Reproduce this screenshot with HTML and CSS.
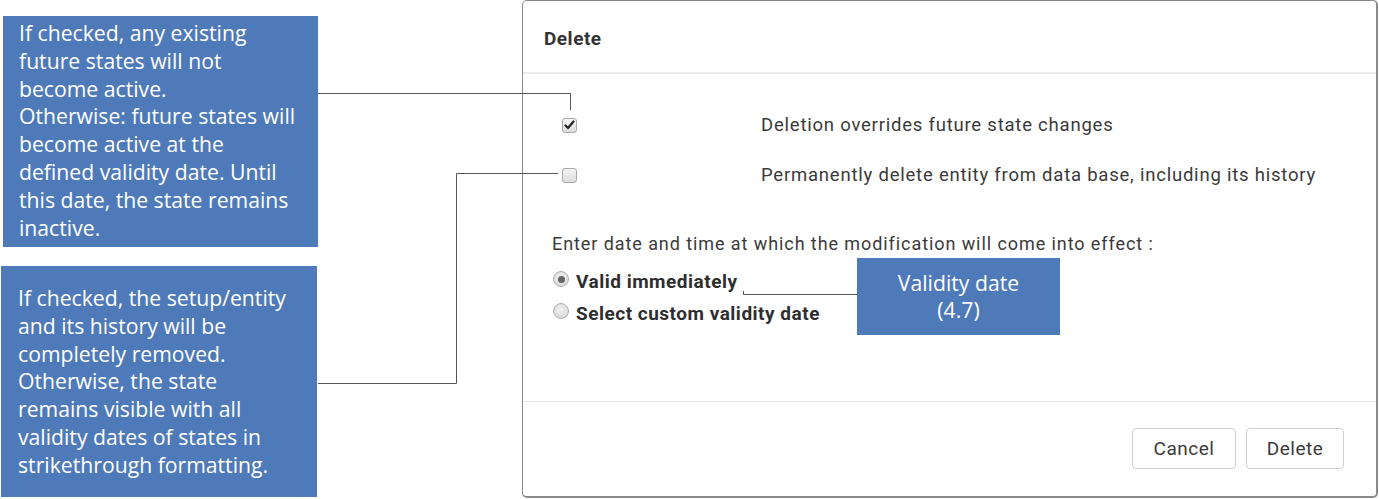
FILE: index.html
```html
<!DOCTYPE html>
<html>
<head>
<meta charset="utf-8">
<link rel="stylesheet" href="styles.css">
</head>
<body>
<div class="page">
  <div class="notes">
    <div class="note note-1">If checked, any existing<br>future states will not<br>become active.<br>Otherwise: future states will<br>become active at the<br>defined validity date. Until<br>this date, the state remains<br>inactive.</div>
    <div class="note note-2">If checked, the setup/entity<br>and its history will be<br>completely removed.<br>Otherwise, the state<br>remains visible with all<br>validity dates of states in<br>strikethrough formatting.</div>
  </div>
  <div class="dialog">
    <div class="dlg-head"><span class="dlg-title">Delete</span></div>
    <div class="dlg-body">
      <div class="options">
        <span class="cb checked"><svg width="11" height="10" viewBox="0 0 11 10"><path d="M1.5 5.5 L4 8 L9.5 1.5" fill="none" stroke="#222" stroke-width="2.2" stroke-linecap="round" stroke-linejoin="round"/></svg></span>
        <span class="opt-label">Deletion overrides future state changes</span>
        <span class="cb"></span>
        <span class="opt-label">Permanently delete entity from data base, including its history</span>
      </div>
      <div class="prompt">Enter date and time at which the modification will come into effect :</div>
      <div class="radios">
        <div class="radio-row"><span class="radio checked"></span><span class="radio-label">Valid immediately</span></div>
        <div class="radio-row"><span class="radio"></span><span class="radio-label">Select custom validity date</span></div>
      </div>
    </div>
    <div class="dlg-foot">
      <button class="btn">Cancel</button>
      <button class="btn">Delete</button>
    </div>
  </div>
  <div class="note note-3">Validity date<br>(4.7)</div>
  <svg class="leaders" width="1379" height="499" viewBox="0 0 1379 499">
    <path d="M318 93.5 H570.5 V110" />
    <path d="M558 173.5 H456.5 V383.5 H318" />
    <path d="M743.5 291 V294.5 H857" />
  </svg>
</div>
</body>
</html>
```
FILE: styles.css
```css
html, body {
  margin: 0;
  padding: 0;
  background: #ffffff;
}
.page {
  position: relative;
  width: 1379px;
  height: 499px;
  overflow: hidden;
  display: flex;
  align-items: flex-start;
}
.notes {
  display: flex;
  flex-direction: column;
  width: 320px;
  flex: none;
}
.note {
  background: #4f7ab9;
  color: #ffffff;
  font-family: "Open Sans", "Noto Sans", sans-serif;
  font-size: 21.2px;
  line-height: 27.8px;
  box-sizing: border-box;
}
.note-1 {
  margin: 16px 0 0 3px;
  width: 315px;
  height: 231px;
  padding: 3px 0 0 16px;
}
.note-2 {
  margin: 19px 0 0 1px;
  width: 316px;
  height: 231px;
  padding: 18px 0 0 17px;
}
.note-3 {
  position: absolute;
  left: 857px;
  top: 258px;
  width: 203px;
  height: 77px;
  text-align: center;
  padding-top: 11px;
  line-height: 27px;
}
.dialog {
  margin-left: 202px;
  width: 856px;
  height: 498px;
  box-sizing: border-box;
  border: 1px solid #8a8a8a;
  border-right: 2px solid #8a8a8a;
  border-bottom: 2px solid #8a8a8a;
  border-radius: 5px;
  display: flex;
  flex-direction: column;
  font-family: Roboto, "Liberation Sans", sans-serif;
  color: #333333;
  background: #ffffff;
}
.dlg-head {
  height: 71px;
  flex: none;
  display: flex;
  align-items: center;
  padding-left: 21px;
  border-bottom: 2px solid #ececec;
}
.dlg-title {
  font-size: 19px;
  letter-spacing: 0.5px;
  font-weight: 700;
  color: #333;
  margin-top: 3px;
}
.dlg-body {
  flex: 1;
  border-bottom: 1px solid #e6e6e6;
}
.options {
  display: grid;
  grid-template-columns: 199px auto;
  grid-auto-rows: 50px;
  align-items: center;
  padding: 26px 0 0 39px;
}
.cb {
  width: 15px;
  height: 15px;
  box-sizing: border-box;
  border: 1px solid #a9a9a9;
  border-radius: 3px;
  background: linear-gradient(#f4f4f4, #dcdcdc);
  display: flex;
  align-items: center;
  justify-content: center;
}
.opt-label {
  font-size: 18.5px;
  letter-spacing: 0.78px;
  color: #3a3a3a;
}
.prompt {
  margin: 32px 0 0 29px;
  font-size: 18px;
  letter-spacing: 0.92px;
  line-height: 24px;
  color: #3a3a3a;
}
.radios {
  margin: 9px 0 0 30px;
}
.radio-row {
  height: 32px;
  display: flex;
  align-items: center;
}
.radio {
  width: 16px;
  height: 16px;
  box-sizing: border-box;
  border-radius: 50%;
  border: 1px solid #b0b0b0;
  background: radial-gradient(circle at 50% 40%, #f2f2f2, #d2d2d2);
  margin-right: 7px;
  position: relative;
  top: -2px;
}
.radio.checked::after {
  content: "";
  position: absolute;
  left: 3.5px;
  top: 3.5px;
  width: 7px;
  height: 7px;
  border-radius: 50%;
  background: #666;
}
.radio-label {
  font-size: 19px;
  letter-spacing: 0.5px;
  font-weight: 700;
  color: #2e2e2e;
}
.dlg-foot {
  height: 94px;
  flex: none;
  display: flex;
  justify-content: flex-end;
  align-items: flex-start;
  gap: 10px;
  padding: 26px 32px 0 0;
  box-sizing: border-box;
}
.btn {
  height: 41px;
  padding: 0;
  border: 1px solid #cfcfcf;
  border-radius: 4px;
  background: #ffffff;
  font-family: Roboto, "Liberation Sans", sans-serif;
  font-size: 19px;
  letter-spacing: 0.5px;
  color: #3a3a3a;
}
.btn:first-child { width: 104px; }
.btn:last-child { width: 98px; }
.leaders {
  position: absolute;
  left: 0;
  top: 0;
  pointer-events: none;
}
.leaders path {
  fill: none;
  stroke: #555;
  stroke-width: 1;
}
```
